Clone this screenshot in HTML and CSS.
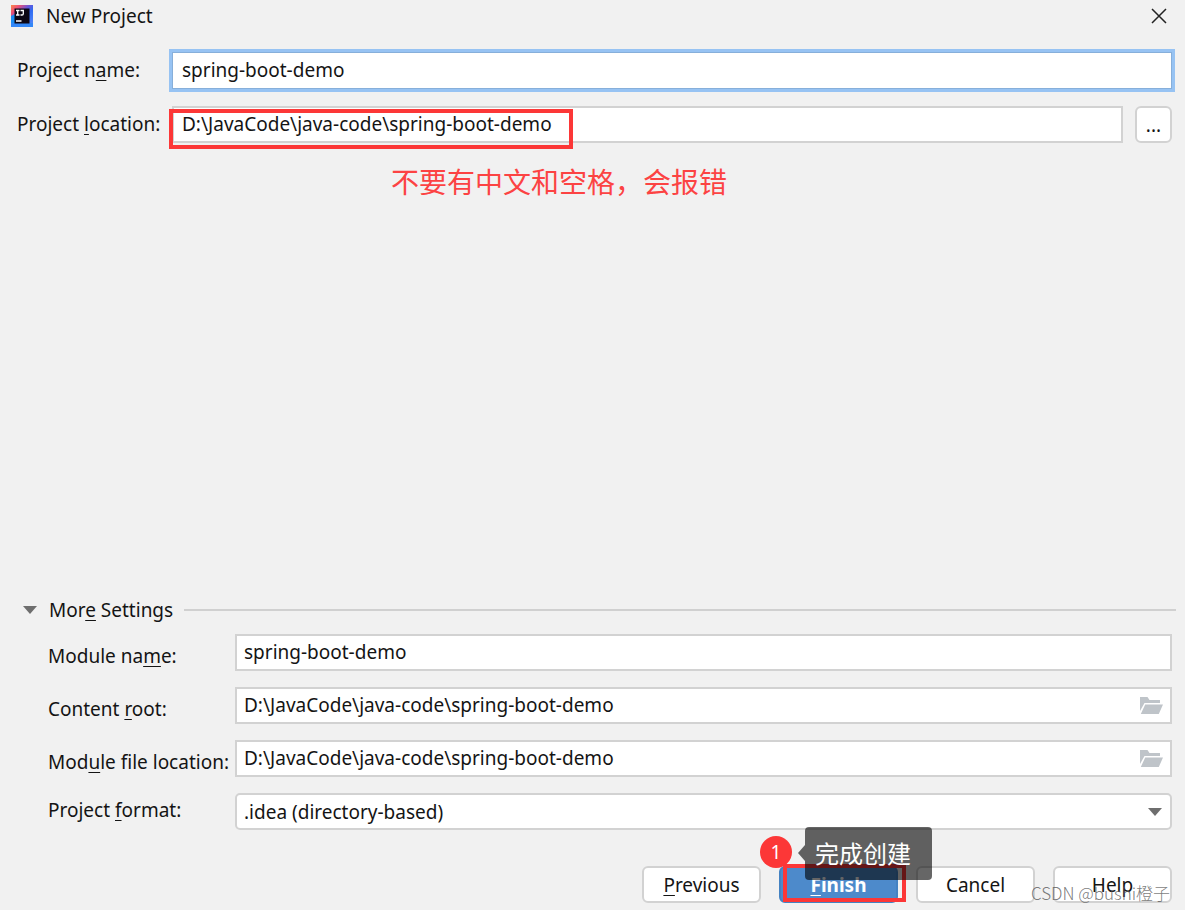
FILE: index.html
```html
<!DOCTYPE html>
<html lang="en">
<head>
<meta charset="utf-8">
<title>New Project</title>
<link rel="stylesheet" href="styles.css">
</head>
<body>
<form class="dialog">
  <header class="titlebar">
    <svg class="logo" viewBox="0 0 22 22" aria-hidden="true">
      <defs>
        <linearGradient id="warm" x1="0" y1="0" x2="1" y2="1">
          <stop offset="0" stop-color="#fb8a4a"/>
          <stop offset="0.2" stop-color="#ee4f74"/>
          <stop offset="0.42" stop-color="#6a55d8"/>
          <stop offset="0.6" stop-color="#2f6cf2"/>
          <stop offset="1" stop-color="#5a8cfa"/>
        </linearGradient>
      </defs>
      <rect width="22" height="22" fill="url(#warm)"/>
      <path d="M0 11 4 9v13H0z" fill="#1c8cf2"/>
      <path d="M0 18h22v4H0z" fill="#3387f7"/>
      <rect x="3.500" y="3.500" width="15" height="15" fill="#0c0714"/>
      <path d="M5 5.500h3.500M6.700 5.500v4.500M5 10h3.500M9.500 5.500H12.300v3.200Q12.300 10 11 10H9.500M5 16h5.500" fill="none" stroke="#fff" stroke-width="1.300"/>
    </svg>
    <h1 class="title">New Project</h1>
    <button class="close" type="button" aria-label="Close">
      <svg viewBox="0 0 16 16" width="16" height="16"><path d="M1 1 15 15M15 1 1 15" fill="none" stroke="#222" stroke-width="1.500"/></svg>
    </button>
  </header>

  <section class="project">
    <label for="name">Project n<u>a</u>me:</label>
    <input class="field focused" id="name" type="text" value="spring-boot-demo">
    <label for="location">Project <u>l</u>ocation:</label>
    <div class="location">
      <input class="field" id="location" type="text" value="D:\JavaCode\java-code\spring-boot-demo">
      <button class="button browse" type="button" aria-label="Browse">...</button>
      <span class="mark mark-location"></span>
    </div>
  </section>
  <p class="note" lang="zh">不要有中文和空格，会报错</p>

  <section class="more">
    <button class="more-head" type="button">
      <svg class="arrow" viewBox="0 0 14 8"><path d="M0 0h14L7 8z" fill="#6e6e6e"/></svg>
      <span class="more-title">Mor<u>e</u> Settings</span>
      <span class="rule"></span>
    </button>
    <div class="settings">
      <label for="module">Module na<u>m</u>e:</label>
      <input class="field" id="module" type="text" value="spring-boot-demo">
      <label for="root">Content <u>r</u>oot:</label>
      <div class="with-icon">
        <input class="field" id="root" type="text" value="D:\JavaCode\java-code\spring-boot-demo">
        <button class="folder" type="button" aria-label="Choose content root">
          <svg viewBox="0 0 23 17" width="23" height="17"><path d="M0 0h7.500l2 3H20v3H4.500L0 14zM5.200 7.500H23L18.800 17H.8z" fill="#bfc4c9"/></svg>
        </button>
      </div>
      <label for="file">Mod<u>u</u>le file location:</label>
      <div class="with-icon">
        <input class="field" id="file" type="text" value="D:\JavaCode\java-code\spring-boot-demo">
        <button class="folder" type="button" aria-label="Choose module file location">
          <svg viewBox="0 0 23 17" width="23" height="17"><path d="M0 0h7.500l2 3H20v3H4.500L0 14zM5.200 7.500H23L18.800 17H.8z" fill="#bfc4c9"/></svg>
        </button>
      </div>
      <label class="format-label" for="format">Project <u>f</u>ormat:</label>
      <div class="with-icon">
        <select class="field select" id="format"><option>.idea (directory-based)</option></select>
        <svg class="arrow select-arrow" viewBox="0 0 14 8"><path d="M0 0h14L7 8z" fill="#6e6e6e"/></svg>
      </div>
    </div>
  </section>

  <footer class="actions">
    <button class="button" type="button"><u>P</u>revious</button>
    <div class="finish">
      <button class="button primary" type="submit"><u>F</u>inish</button>
      <span class="mark mark-finish"></span>
      <span class="step">1</span>
      <span class="tip" lang="zh">完成创建</span>
    </div>
    <button class="button" type="button">Cancel</button>
    <button class="button" type="button">Help</button>
  </footer>
  <span class="watermark" lang="zh">CSDN @bushi橙子</span>
</form>
</body>
</html>
```
FILE: styles.css
```css
* { box-sizing: border-box; }
body { margin: 0; background: #f1f1f1; }
.dialog {
  position: relative;
  display: flex;
  flex-direction: column;
  min-height: 100vh;
  padding: 0 13px 7px 11px;
  color: #141414;
  font: 19px/28px "Noto Sans", "Noto Sans CJK SC", sans-serif;
}
button, input, select { font: inherit; color: inherit; }
button { padding: 0; border: 0; background: none; }
svg { display: block; }
u { text-decoration-thickness: 1px; text-underline-offset: 3px; }

.titlebar { display: flex; align-items: center; height: 31px; }
.logo { width: 22px; height: 22px; }
.title { margin: 0 auto 0 13px; font-size: 19px; font-weight: 400; }
.close { display: flex; margin-right: 5px; }

.project {
  display: grid;
  grid-template-columns: 155px 1fr;
  row-gap: 17px;
  align-items: center;
  padding: 21px 0 0 6px;
}
.project label { padding-bottom: 2px; }
.field {
  display: block;
  width: 100%;
  height: 37px;
  padding: 0 7px 2px;
  border: 2px solid #d2d2d2;
  border-radius: 0;
  background: #fff;
  outline: 0;
}
.project .field { padding-left: 8px; }
.project .focused { border-color: #87afda; border-width: 1px; padding-left: 9px; box-shadow: 0 0 0 3px #97c3f3; }
.location { position: relative; display: flex; gap: 12px; }
.location .field { flex: 1; min-width: 0; }
.button {
  width: 119px;
  height: 37px;
  border: 2px solid #d2d2d2;
  border-radius: 6px;
  background: #fff;
}
.browse { width: 37px; }
.mark { position: absolute; border: 4px solid #fc3737; pointer-events: none; }
.mark-location { left: -3px; top: 3px; width: 404px; height: 40px; }
.note {
  margin: 18px 0 0 380px;
  color: #fc4343;
  font: 28px/40px "Noto Sans CJK SC", sans-serif;
}

.more { margin-top: auto; }
.more-head { display: flex; align-items: center; width: 100%; padding-left: 12px; text-align: left; }
.arrow { width: 14px; height: 8px; }
.more-title { margin: 0 11px 0 12px; }
.rule { flex: 1; height: 2px; margin-right: -4px; background: #d0d0d0; }
.settings {
  display: grid;
  grid-template-columns: 187px 1fr;
  row-gap: 16px;
  align-items: center;
  padding: 10px 0 0 37px;
}
.settings label { padding-top: 7px; white-space: nowrap; }
.settings .format-label { padding: 0 0 4px; }
.with-icon { position: relative; }
.folder { position: absolute; right: 9px; top: 10px; }
.select { appearance: none; padding: 0 7px; border-radius: 5px; }
.select-arrow { position: absolute; right: 10px; top: 15px; pointer-events: none; }

.actions { display: flex; justify-content: flex-end; gap: 18px; padding-top: 36px; }
.finish { position: relative; }
.primary { border-color: #4482c2; background: #4d8acb; color: #fff; font-weight: 700; }
.mark-finish { left: 4px; top: -2px; width: 123px; height: 38px; }
.step {
  position: absolute;
  left: -19px;
  top: -30px;
  width: 32px;
  height: 32px;
  border-radius: 50%;
  background: #fc3737;
  color: #fff;
  line-height: 32px;
  text-align: center;
}
.tip {
  position: absolute;
  left: 26px;
  top: -39px;
  z-index: 1;
  width: 127px;
  height: 53px;
  padding-left: 10px;
  border-radius: 4px;
  background: rgba(0, 0, 0, 0.6);
  color: #fff;
  font: 24px/52px "Noto Sans CJK SC", sans-serif;
  white-space: nowrap;
}
.tip::before {
  content: "";
  position: absolute;
  right: 100%;
  top: 18px;
  border: 8px solid transparent;
  border-left: 0;
  border-right: 7px solid rgba(0, 0, 0, 0.6);
}
.watermark {
  position: absolute;
  right: 15px;
  bottom: 3px;
  color: rgba(90, 90, 90, 0.8);
  font: 300 17px/28px "Noto Sans CJK SC", sans-serif;
  pointer-events: none;
}
```
